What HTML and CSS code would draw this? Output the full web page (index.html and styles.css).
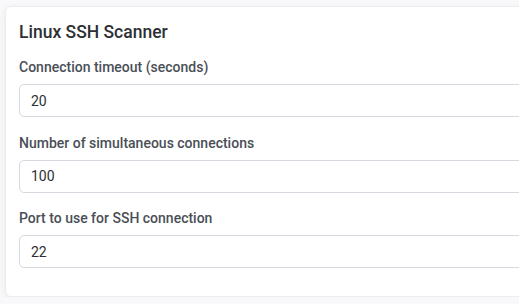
FILE: index.html
```html
<!DOCTYPE html>
<html>
<head>
<meta charset="utf-8">
<link rel="stylesheet" href="styles.css">
</head>
<body>
<div class="card">
  <h2 class="title">Linux SSH Scanner</h2>
  <div class="field">
    <label class="label">Connection timeout (seconds)</label>
    <input class="input" type="text" value="20">
  </div>
  <div class="field">
    <label class="label">Number of simultaneous connections</label>
    <input class="input" type="text" value="100">
  </div>
  <div class="field">
    <label class="label">Port to use for SSH connection</label>
    <input class="input" type="text" value="22">
  </div>
</div>
</body>
</html>
```
FILE: styles.css
```css
html, body {
  margin: 0;
  padding: 0;
  background: #f8f8fa;
  font-family: Roboto, "Liberation Sans", sans-serif;
  overflow: hidden;
}
body {
  padding: 6px 0 0 5px;
}
.card {
  width: 560px;
  box-sizing: border-box;
  background: #fff;
  border: 1px solid #ececf0;
  border-radius: 6px;
  box-shadow: 0 2px 6px rgba(0,0,0,0.06);
  padding: 14px 13px 21px 13px;
  height: 291px;
}
.title {
  margin: 0 0 15px 0;
  font-size: 17.5px;
  font-weight: 500;
  color: #2d3035;
  line-height: 22px;
}
.field {
  display: flex;
  flex-direction: column;
  margin-bottom: 16.5px;
}
.label {
  font-size: 14px;
  font-weight: 500;
  color: #4a4f57;
  line-height: 18px;
  margin-bottom: 8px;
}
.input {
  height: 33px;
  box-sizing: border-box;
  border: 1px solid #d5d8de;
  border-radius: 5px;
  padding: 0 11px;
  font-family: Roboto, "Liberation Sans", sans-serif;
  font-size: 14px;
  color: #2d3035;
  background: #fff;
  outline: none;
}
```
